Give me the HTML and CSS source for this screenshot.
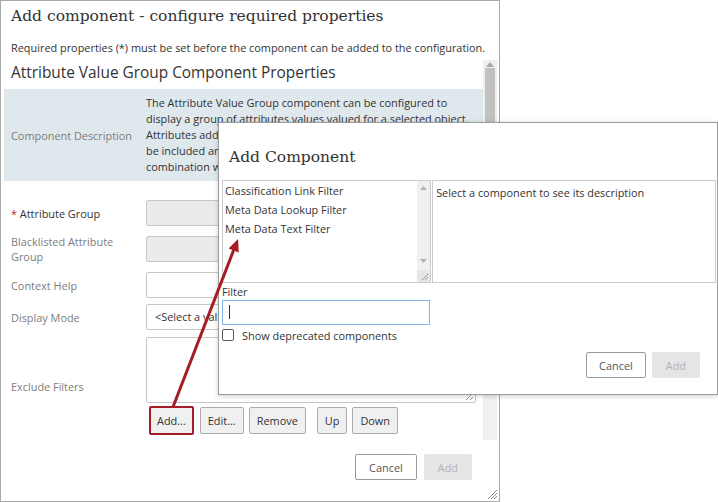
FILE: index.html
```html
<html>

	<head>
		<title>Add component</title>
		<link rel="stylesheet" href="styles.css">
	</head>

	<body>

	<div class="panel">
		<h1 class="title">Add component - configure required properties</h1>
		<p class="note">Required properties (*) must be set before the component can be added to the configuration.</p>

		<!--
			Scrolling property area
		-->
		<div class="scrollArea">
			<div class="scrollBody">
				<h2 class="subTitle">Attribute Value Group Component Properties</h2>

				<div class="descRow">
					<div class="label">Component Description</div>
					<div class="descText">
						The Attribute Value Group component can be configured to<br>
						display a group of attributes values valued for a selected object.<br>
						Attributes added<br>
						be included and<br>
						combination with
					</div>
				</div>

				<div class="formRow">
					<div class="label required"><span class="star">*</span> Attribute Group</div>
					<div class="field disabled"></div>
				</div>
				<div class="formRow tall">
					<div class="label">Blacklisted Attribute<br>Group</div>
					<div class="field disabled"></div>
				</div>
				<div class="formRow">
					<div class="label">Context Help</div>
					<div class="field"></div>
				</div>
				<div class="formRow mode">
					<div class="label">Display Mode</div>
					<div class="field select">&lt;Select a value&gt;</div>
				</div>
				<div class="formRow filters">
					<div class="label">Exclude Filters</div>
					<div class="control">
						<div class="area">
							<svg class="grip" width="10" height="10" viewBox="0 0 10 10">
								<line x1="9" y1="2" x2="2" y2="9" stroke="#999" stroke-width="1"/>
								<line x1="9" y1="6" x2="6" y2="9" stroke="#999" stroke-width="1"/>
							</svg>
						</div>
						<div class="btnRow">
							<button class="btn marked">Add...</button>
							<button class="btn">Edit...</button>
							<button class="btn">Remove</button>
							<button class="btn group">Up</button>
							<button class="btn">Down</button>
						</div>
					</div>
				</div>
			</div>

			<div class="scrollbar">
				<svg class="arrowUp" width="8" height="5" viewBox="0 0 8 5"><polygon points="4,0 8,5 0,5" fill="#a8a8a8"/></svg>
				<div class="thumb"></div>
			</div>
		</div>

		<div class="footer">
			<button class="funcBut">Cancel</button>
			<button class="funcBut disabled">Add</button>
		</div>

		<svg class="cornerGrip" width="12" height="12" viewBox="0 0 12 12">
			<line x1="11" y1="2" x2="2" y2="11" stroke="#888"/>
			<line x1="11" y1="5" x2="5" y2="11" stroke="#888"/>
			<line x1="11" y1="8" x2="8" y2="11" stroke="#888"/>
		</svg>
	</div>

	<!--
		Add Component dialog (shown over the panel)
	-->
	<div class="dialog">
		<h2 class="dlgTitle">Add Component</h2>

		<div class="pickRow">
			<div class="list">
				<div class="items">
					<div class="item">Classification Link Filter</div>
					<div class="item">Meta Data Lookup Filter</div>
					<div class="item">Meta Data Text Filter</div>
				</div>
				<div class="listBar">
					<svg width="7" height="4" viewBox="0 0 7 4"><polygon points="3.5,0 7,4 0,4" fill="#b0b0b0"/></svg>
					<svg class="down" width="7" height="4" viewBox="0 0 7 4"><polygon points="0,0 7,0 3.5,4" fill="#b0b0b0"/></svg>
					<div class="listGrip">
						<svg width="9" height="9" viewBox="0 0 9 9">
							<line x1="8" y1="2" x2="2" y2="8" stroke="#999"/>
							<line x1="8" y1="5" x2="5" y2="8" stroke="#999"/>
						</svg>
					</div>
				</div>
			</div>
			<div class="descBox">Select a component to see its description</div>
		</div>

		<div class="filterLabel">Filter</div>
		<div class="filterInput"><span class="caret"></span></div>

		<label class="check"><span class="box"></span>Show deprecated components</label>

		<div class="dlgFooter">
			<button class="funcBut">Cancel</button>
			<button class="funcBut disabled">Add</button>
		</div>
	</div>

	<!--
		Annotation arrow from the Add... button to the list
	-->
	<svg class="callout" width="718" height="502" viewBox="0 0 718 502">
		<line x1="173" y1="407" x2="233.7" y2="250" stroke="#a51d24" stroke-width="3"/>
		<polygon points="238,239 238.8,252.4 228.6,248.4" fill="#a51d24"/>
	</svg>

	</body>

</html>
```
FILE: styles.css
```css
body {
	margin: 0;
	font-family: "Open Sans", sans-serif;
	font-size: 10.9px;
	color: #333;
	background-color: #fff;
}

button {
	font-family: "Open Sans", sans-serif;
	font-size: 10.9px;
	color: #333;
}

/* Main panel */
.panel {
	position: relative;
	box-sizing: border-box;
	width: 500px;
	height: 502px;
	border: 1px solid #a9a9a9;
	display: flex;
	flex-direction: column;
}

.title {
	margin: 0;
	padding: 5px 10px 0 10px;
	font-family: "DejaVu Serif", serif;
	font-size: 15.5px;
	font-weight: normal;
	line-height: 20px;
	color: #333;
}

.note {
	margin: 14px 0 0 0;
	padding-left: 10px;
	line-height: 15px;
}

/* Scrolling area */
.scrollArea {
	display: flex;
	height: 380px;
	margin: 5px 2px 0 3px;
}

.scrollBody {
	flex: 1;
	overflow: hidden;
}

.subTitle {
	margin: 2px 0 5px 0;
	padding-left: 7px;
	font-size: 15.4px;
	font-weight: normal;
	line-height: 22px;
	color: #333;
}

.label {
	box-sizing: border-box;
	width: 142px;
	flex-shrink: 0;
	padding-left: 7px;
	color: #7d7d7d;
	line-height: 15px;
}

.label.required {
	color: #333;
}

.star {
	color: #c4262e;
}

.descRow {
	display: flex;
	align-items: center;
	padding: 6px 0;
	background-color: #dfe8ec;
}

.descText {
	line-height: 16px;
	white-space: nowrap;
}

.formRow {
	display: flex;
	align-items: center;
	height: 26px;
	margin-top: 8px;
}

.descRow + .formRow {
	margin-top: 19px;
}

.formRow.tall {
	height: 30px;
}

.formRow.mode {
	margin-top: 6px;
}

.formRow.filters {
	height: auto;
	margin-top: 7px;
}

.field {
	box-sizing: border-box;
	width: 330px;
	height: 26px;
	border: 1px solid #c6c6c6;
	border-radius: 2px;
	background-color: #fff;
}

.field.disabled {
	background-color: #ebebeb;
}

.field.select {
	padding-left: 8px;
	line-height: 24px;
	color: #333;
}

.area {
	position: relative;
	box-sizing: border-box;
	width: 330px;
	height: 66px;
	border: 1px solid #c6c6c6;
	border-radius: 2px;
}

.grip {
	position: absolute;
	right: 1px;
	bottom: 1px;
}

.btnRow {
	display: flex;
	align-items: center;
	height: 29px;
	margin: 3px 0 0 3px;
}

.btn {
	box-sizing: border-box;
	height: 27px;
	margin-right: 5px;
	padding: 0 7px;
	border: 1px solid #ababab;
	border-radius: 2px;
	background-color: #f0f0f0;
}

.btn.marked {
	height: 29px;
	margin-right: 6px;
	padding: 0 6px;
	border: 2px solid #a51d24;
}

.btn.group {
	margin-left: 6px;
}

/* Scrollbar */
.scrollbar {
	position: relative;
	width: 14px;
	background-color: #f0f0f0;
}

.arrowUp {
	position: absolute;
	left: 3px;
	top: 2px;
}

.thumb {
	position: absolute;
	left: 2px;
	top: 8px;
	width: 10px;
	height: 230px;
	background-color: #c1c1c1;
}

/* Footer buttons */
.footer {
	display: flex;
	justify-content: flex-end;
	padding: 14px 27px 0 0;
}

.funcBut {
	box-sizing: border-box;
	height: 26px;
	margin-left: 7px;
	padding: 0 13px;
	border: 1px solid #999;
	border-radius: 2px;
	background-color: #fff;
	color: #555;
}

.funcBut.disabled {
	border-color: #e5e5e5;
	background-color: #e5e5e5;
	color: #b3b3b3;
}

.cornerGrip {
	position: absolute;
	right: 1px;
	bottom: 1px;
}

/* Add Component dialog */
.dialog {
	position: absolute;
	left: 218px;
	top: 122px;
	box-sizing: border-box;
	width: 500px;
	height: 273px;
	padding: 0 1px 0 3px;
	border: 1px solid #9c9c9c;
	background-color: #fff;
	box-shadow: 0 1px 5px rgba(0, 0, 0, 0.2);
}

.dlgTitle {
	margin: 24px 0 13px 7px;
	font-family: "DejaVu Serif", serif;
	font-size: 15.5px;
	font-weight: normal;
	line-height: 20px;
	color: #333;
}

.pickRow {
	display: flex;
	height: 103px;
}

.list {
	box-sizing: border-box;
	display: flex;
	width: 210px;
	border: 1px solid #cbcbcb;
}

.items {
	flex: 1;
	padding: 0 0 0 2px;
}

.item {
	line-height: 19px;
	white-space: nowrap;
}

.listBar {
	position: relative;
	width: 13px;
	background-color: #f0f0f0;
}

.listBar svg {
	position: absolute;
	left: 3px;
	top: 5px;
}

.listBar svg.down {
	top: 78px;
}

.listGrip {
	position: absolute;
	left: 0;
	bottom: 0;
	width: 13px;
	height: 12px;
	background-color: #e6e6e6;
}

.listGrip svg {
	left: 3px;
	top: 2px;
}

.descBox {
	box-sizing: border-box;
	width: 285px;
	margin-left: 1px;
	padding: 4px 0 0 3px;
	border: 1px solid #cbcbcb;
	line-height: 16px;
}

.filterLabel {
	margin-top: 1px;
	line-height: 16px;
}

.filterInput {
	position: relative;
	box-sizing: border-box;
	width: 208px;
	height: 25px;
	border: 1px solid #80b5e9;
}

.caret {
	position: absolute;
	left: 6px;
	top: 4px;
	width: 1px;
	height: 14px;
	background-color: #333;
}

.check {
	display: flex;
	align-items: center;
	height: 14px;
	margin-top: 3px;
	color: #333;
}

.box {
	box-sizing: border-box;
	width: 12px;
	height: 12px;
	margin-right: 8px;
	border: 1.5px solid #5a5a5a;
	border-radius: 2px;
}

.dlgFooter {
	display: flex;
	justify-content: flex-end;
	padding: 10px 16px 0 0;
}

.dlgFooter .funcBut {
	margin-left: 6px;
	padding: 0 12px;
}

.dlgFooter .funcBut.disabled {
	padding: 0 13px;
}

/* Annotation */
.callout {
	position: absolute;
	left: 0;
	top: 0;
	pointer-events: none;
}
```
